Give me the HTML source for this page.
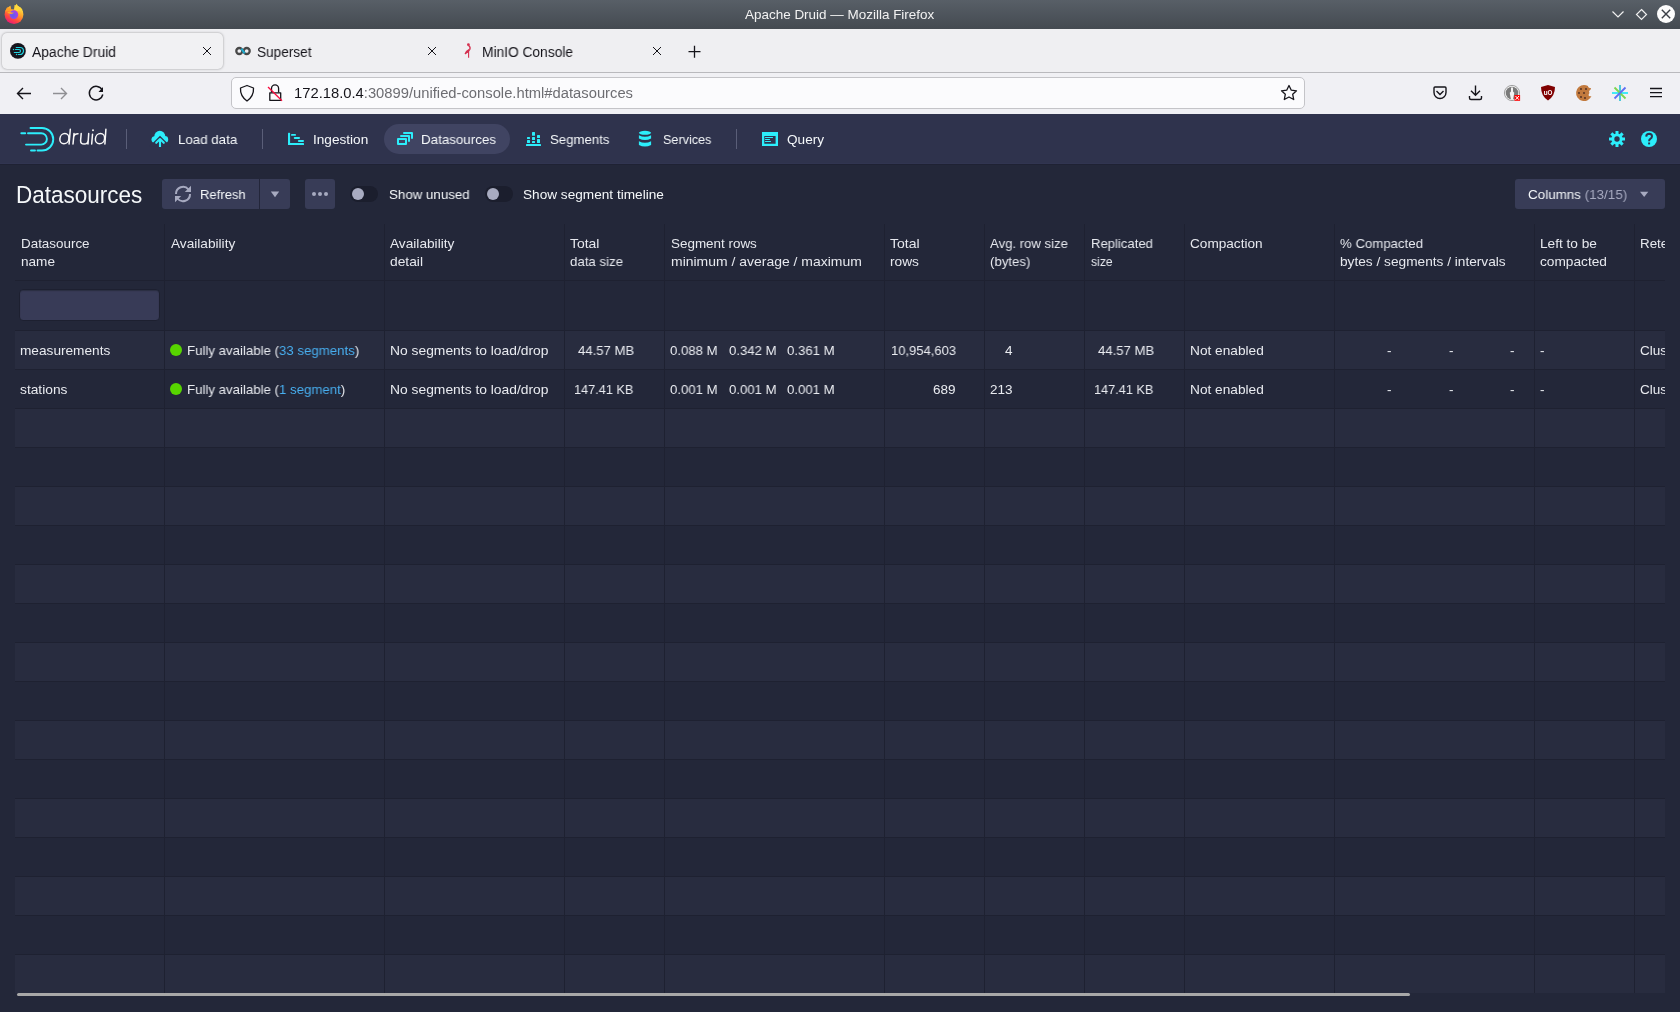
<!DOCTYPE html>
<html><head><meta charset="utf-8">
<style>
*{margin:0;padding:0;box-sizing:border-box}
html,body{width:1680px;height:1012px;overflow:hidden;background:#232739;font-family:"Liberation Sans",sans-serif}
.a{position:absolute;white-space:nowrap}
.t{will-change:transform}
.lk{color:#48aff0}
svg.ov{position:absolute;left:0;top:0}
</style></head><body>
<div class="a" style="left:0;top:0;width:1680px;height:29px;background:linear-gradient(#585f67,#444a51)"></div>
<div class="a t" style="left:745px;top:7px;font-size:13px;line-height:16px;color:#f2f2f2;transform:scaleX(1.0356);transform-origin:0 0">Apache Druid — Mozilla Firefox</div>
<div class="a" style="left:0;top:29px;width:1680px;height:43px;background:#efeff2"></div>
<div class="a" style="left:2px;top:33px;width:221px;height:36px;background:#f1f1f3;border-radius:5px;box-shadow:0 0 2.5px rgba(0,0,0,.38)"></div>
<div class="a t" style="left:32px;top:44px;font-size:14px;line-height:16px;color:#15141a;transform:scaleX(0.9903);transform-origin:0 0">Apache Druid</div>
<div class="a t" style="left:257px;top:44px;font-size:14px;line-height:16px;color:#15141a;transform:scaleX(0.9727);transform-origin:0 0">Superset</div>
<div class="a t" style="left:482px;top:44px;font-size:14px;line-height:16px;color:#15141a;transform:scaleX(0.9828);transform-origin:0 0">MinIO Console</div>
<div class="a" style="left:0;top:72px;width:1680px;height:1px;background:#b9b9bd"></div>
<div class="a" style="left:0;top:73px;width:1680px;height:41px;background:#f0f0f4"></div>
<div class="a" style="left:231px;top:77px;width:1074px;height:32px;background:#fbfbfd;border:1px solid #c4c4c8;border-radius:5px"></div>
<div class="a t" style="left:294px;top:85px;font-size:14px;line-height:16px;color:#15141a;transform:scaleX(1.0546);transform-origin:0 0">172.18.0.4<span style="color:#6d6d72">:30899/unified-console.html#datasources</span></div>
<div class="a" style="left:0;top:114px;width:1680px;height:50px;background:#2f334d"></div>
<div class="a" style="left:0;top:163px;width:1680px;height:1px;background:#313551"></div>
<div class="a" style="left:0;top:164px;width:1680px;height:1px;background:#1f2234"></div>
<div class="a" style="left:384px;top:124px;width:126px;height:30px;border-radius:15px;background:#404462"></div>
<div class="a t" style="left:177.5px;top:132px;font-size:13.6px;line-height:16px;color:#f5f8fa;transform:scaleX(0.9782);transform-origin:0 0">Load data</div>
<div class="a t" style="left:313px;top:132px;font-size:13.6px;line-height:16px;color:#f5f8fa;transform:scaleX(1.0018);transform-origin:0 0">Ingestion</div>
<div class="a t" style="left:421.4px;top:132px;font-size:13.6px;line-height:16px;color:#f5f8fa;transform:scaleX(0.9823);transform-origin:0 0">Datasources</div>
<div class="a t" style="left:549.9px;top:132px;font-size:13.6px;line-height:16px;color:#f5f8fa;transform:scaleX(0.9702);transform-origin:0 0">Segments</div>
<div class="a t" style="left:662.6px;top:132px;font-size:13.6px;line-height:16px;color:#f5f8fa;transform:scaleX(0.9280);transform-origin:0 0">Services</div>
<div class="a t" style="left:787.4px;top:132px;font-size:13.6px;line-height:16px;color:#f5f8fa;transform:scaleX(0.9883);transform-origin:0 0">Query</div>
<div class="a" style="left:126px;top:129px;width:1px;height:20px;background:#5a5e78"></div>
<div class="a" style="left:262px;top:129px;width:1px;height:20px;background:#5a5e78"></div>
<div class="a" style="left:736px;top:129px;width:1px;height:20px;background:#5a5e78"></div>
<div class="a t" style="left:15.5px;top:181px;font-size:22.5px;color:#f5f8fa;line-height:26px;transform:scaleY(1.1);transform-origin:0 0">Datasources</div>
<div class="a" style="left:162px;top:179px;width:128px;height:30px;border-radius:3px;background:#383c57"></div>
<div class="a" style="left:259px;top:179px;width:1px;height:30px;background:#23263a"></div>
<div class="a t" style="left:200px;top:187px;font-size:13.6px;line-height:16px;color:#f5f8fa;transform:scaleX(0.9598);transform-origin:0 0">Refresh</div>
<div class="a" style="left:305px;top:179px;width:30px;height:30px;border-radius:3px;background:#383c57"></div>
<div class="a" style="left:350px;top:186px;width:28px;height:16px;border-radius:8px;background:#1b1e2d"></div>
<div class="a" style="left:352px;top:188px;width:12px;height:12px;border-radius:6px;background:#a8abc0"></div>
<div class="a" style="left:485.3px;top:186px;width:28px;height:16px;border-radius:8px;background:#1b1e2d"></div>
<div class="a" style="left:487.3px;top:188px;width:12px;height:12px;border-radius:6px;background:#a8abc0"></div>
<div class="a t" style="left:388.6px;top:187px;font-size:13.6px;line-height:16px;color:#f5f8fa;transform:scaleX(0.9792);transform-origin:0 0">Show unused</div>
<div class="a t" style="left:523.1px;top:187px;font-size:13.6px;line-height:16px;color:#f5f8fa;transform:scaleX(1.0022);transform-origin:0 0">Show segment timeline</div>
<div class="a" style="left:1515px;top:179px;width:150px;height:30px;border-radius:3px;background:#383c57"></div>
<div class="a t" style="left:1528.3px;top:187px;font-size:13.6px;line-height:16px;color:#f5f8fa;transform:scaleX(0.9868);transform-origin:0 0">Columns <span style="color:#a7aac0">(13/15)</span></div>
<div class="a" style="left:15px;top:331px;width:1650px;height:38px;background:#282c3f"></div>
<div class="a" style="left:15px;top:330px;width:1650px;height:1px;background:#1e2131"></div>
<div class="a" style="left:15px;top:370px;width:1650px;height:38px;background:#232739"></div>
<div class="a" style="left:15px;top:369px;width:1650px;height:1px;background:#1e2131"></div>
<div class="a" style="left:15px;top:409px;width:1650px;height:38px;background:#282c3f"></div>
<div class="a" style="left:15px;top:408px;width:1650px;height:1px;background:#1e2131"></div>
<div class="a" style="left:15px;top:448px;width:1650px;height:38px;background:#232739"></div>
<div class="a" style="left:15px;top:447px;width:1650px;height:1px;background:#1e2131"></div>
<div class="a" style="left:15px;top:487px;width:1650px;height:38px;background:#282c3f"></div>
<div class="a" style="left:15px;top:486px;width:1650px;height:1px;background:#1e2131"></div>
<div class="a" style="left:15px;top:526px;width:1650px;height:38px;background:#232739"></div>
<div class="a" style="left:15px;top:525px;width:1650px;height:1px;background:#1e2131"></div>
<div class="a" style="left:15px;top:565px;width:1650px;height:38px;background:#282c3f"></div>
<div class="a" style="left:15px;top:564px;width:1650px;height:1px;background:#1e2131"></div>
<div class="a" style="left:15px;top:604px;width:1650px;height:38px;background:#232739"></div>
<div class="a" style="left:15px;top:603px;width:1650px;height:1px;background:#1e2131"></div>
<div class="a" style="left:15px;top:643px;width:1650px;height:38px;background:#282c3f"></div>
<div class="a" style="left:15px;top:642px;width:1650px;height:1px;background:#1e2131"></div>
<div class="a" style="left:15px;top:682px;width:1650px;height:38px;background:#232739"></div>
<div class="a" style="left:15px;top:681px;width:1650px;height:1px;background:#1e2131"></div>
<div class="a" style="left:15px;top:721px;width:1650px;height:38px;background:#282c3f"></div>
<div class="a" style="left:15px;top:720px;width:1650px;height:1px;background:#1e2131"></div>
<div class="a" style="left:15px;top:760px;width:1650px;height:38px;background:#232739"></div>
<div class="a" style="left:15px;top:759px;width:1650px;height:1px;background:#1e2131"></div>
<div class="a" style="left:15px;top:799px;width:1650px;height:38px;background:#282c3f"></div>
<div class="a" style="left:15px;top:798px;width:1650px;height:1px;background:#1e2131"></div>
<div class="a" style="left:15px;top:838px;width:1650px;height:38px;background:#232739"></div>
<div class="a" style="left:15px;top:837px;width:1650px;height:1px;background:#1e2131"></div>
<div class="a" style="left:15px;top:877px;width:1650px;height:38px;background:#282c3f"></div>
<div class="a" style="left:15px;top:876px;width:1650px;height:1px;background:#1e2131"></div>
<div class="a" style="left:15px;top:916px;width:1650px;height:38px;background:#232739"></div>
<div class="a" style="left:15px;top:915px;width:1650px;height:1px;background:#1e2131"></div>
<div class="a" style="left:15px;top:955px;width:1650px;height:38px;background:#282c3f"></div>
<div class="a" style="left:15px;top:954px;width:1650px;height:1px;background:#1e2131"></div>
<div class="a" style="left:15px;top:280px;width:1650px;height:1px;background:#1e2131"></div>
<div class="a" style="left:164px;top:224px;width:1px;height:769px;background:#1e2131"></div>
<div class="a" style="left:384px;top:224px;width:1px;height:769px;background:#1e2131"></div>
<div class="a" style="left:564px;top:224px;width:1px;height:769px;background:#1e2131"></div>
<div class="a" style="left:664px;top:224px;width:1px;height:769px;background:#1e2131"></div>
<div class="a" style="left:884px;top:224px;width:1px;height:769px;background:#1e2131"></div>
<div class="a" style="left:984px;top:224px;width:1px;height:769px;background:#1e2131"></div>
<div class="a" style="left:1084px;top:224px;width:1px;height:769px;background:#1e2131"></div>
<div class="a" style="left:1184px;top:224px;width:1px;height:769px;background:#1e2131"></div>
<div class="a" style="left:1334px;top:224px;width:1px;height:769px;background:#1e2131"></div>
<div class="a" style="left:1534px;top:224px;width:1px;height:769px;background:#1e2131"></div>
<div class="a" style="left:1634px;top:224px;width:1px;height:769px;background:#1e2131"></div>
<div class="a t" style="left:20.599999999999998px;top:235px;font-size:13.4px;line-height:18px;color:#e6e8ee;transform:scaleX(1.0011);transform-origin:0 0">Datasource</div>
<div class="a t" style="left:20.599999999999998px;top:253px;font-size:13.4px;line-height:18px;color:#e6e8ee;transform:scaleX(1.0145);transform-origin:0 0">name</div>
<div class="a t" style="left:170.5px;top:235px;font-size:13.4px;line-height:18px;color:#e6e8ee;transform:scaleX(1.0197);transform-origin:0 0">Availability</div>
<div class="a t" style="left:390.4px;top:235px;font-size:13.4px;line-height:18px;color:#e6e8ee;transform:scaleX(1.0212);transform-origin:0 0">Availability</div>
<div class="a t" style="left:390.4px;top:253px;font-size:13.4px;line-height:18px;color:#e6e8ee;transform:scaleX(1.0300);transform-origin:0 0">detail</div>
<div class="a t" style="left:570.4000000000001px;top:235px;font-size:13.4px;line-height:18px;color:#e6e8ee;transform:scaleX(1.0388);transform-origin:0 0">Total</div>
<div class="a t" style="left:570.4000000000001px;top:253px;font-size:13.4px;line-height:18px;color:#e6e8ee;transform:scaleX(0.9883);transform-origin:0 0">data size</div>
<div class="a t" style="left:670.7px;top:235px;font-size:13.4px;line-height:18px;color:#e6e8ee;transform:scaleX(1.0029);transform-origin:0 0">Segment rows</div>
<div class="a t" style="left:670.7px;top:253px;font-size:13.4px;line-height:18px;color:#e6e8ee;transform:scaleX(1.0422);transform-origin:0 0">minimum / average / maximum</div>
<div class="a t" style="left:890.2px;top:235px;font-size:13.4px;line-height:18px;color:#e6e8ee;transform:scaleX(1.0459);transform-origin:0 0">Total</div>
<div class="a t" style="left:890.2px;top:253px;font-size:13.4px;line-height:18px;color:#e6e8ee;transform:scaleX(1.0217);transform-origin:0 0">rows</div>
<div class="a t" style="left:990.2px;top:235px;font-size:13.4px;line-height:18px;color:#e6e8ee;transform:scaleX(0.9807);transform-origin:0 0">Avg. row size</div>
<div class="a t" style="left:990.2px;top:253px;font-size:13.4px;line-height:18px;color:#e6e8ee;transform:scaleX(0.9866);transform-origin:0 0">(bytes)</div>
<div class="a t" style="left:1090.6000000000001px;top:235px;font-size:13.4px;line-height:18px;color:#e6e8ee;transform:scaleX(0.9777);transform-origin:0 0">Replicated</div>
<div class="a t" style="left:1090.6000000000001px;top:253px;font-size:13.4px;line-height:18px;color:#e6e8ee;transform:scaleX(0.9108);transform-origin:0 0">size</div>
<div class="a t" style="left:1190.2px;top:235px;font-size:13.4px;line-height:18px;color:#e6e8ee;transform:scaleX(1.0154);transform-origin:0 0">Compaction</div>
<div class="a t" style="left:1340.2px;top:235px;font-size:13.4px;line-height:18px;color:#e6e8ee;transform:scaleX(0.9862);transform-origin:0 0">% Compacted</div>
<div class="a t" style="left:1340.2px;top:253px;font-size:13.4px;line-height:18px;color:#e6e8ee;transform:scaleX(1.0212);transform-origin:0 0">bytes / segments / intervals</div>
<div class="a t" style="left:1540.2px;top:235px;font-size:13.4px;line-height:18px;color:#e6e8ee;transform:scaleX(1.0201);transform-origin:0 0">Left to be</div>
<div class="a t" style="left:1540.2px;top:253px;font-size:13.4px;line-height:18px;color:#e6e8ee;transform:scaleX(1.0221);transform-origin:0 0">compacted</div>
<div class="a" style="left:1635px;top:224px;width:30px;height:40px;overflow:hidden"><div class="a t" style="left:5px;top:11px;font-size:13.4px;line-height:18px;color:#e6e8ee">Retention</div></div>
<div class="a" style="left:19px;top:289px;width:141px;height:32px;border-radius:4px;background:#383b57;border:1px solid #1d2030;box-shadow:inset 0 1px 1px rgba(16,22,26,.35)"></div>
<div class="a t" style="left:20.2px;top:343px;font-size:13.5px;line-height:16px;color:#e9ebf0;transform:scaleX(1.0113);transform-origin:0 0">measurements</div>
<div class="a t" style="left:187px;top:343px;font-size:13.5px;line-height:16px;color:#e9ebf0;transform:scaleX(0.9813);transform-origin:0 0">Fully available (<span class="lk">33 segments</span>)</div>
<div class="a t" style="left:390.2px;top:343px;font-size:13.5px;line-height:16px;color:#e9ebf0;transform:scaleX(1.0253);transform-origin:0 0">No segments to load/drop</div>
<div class="a t" style="left:577.5px;top:343px;font-size:13.5px;line-height:16px;color:#e9ebf0;transform:scaleX(0.9727);transform-origin:0 0">44.57 MB</div>
<div class="a t" style="left:670.1px;top:343px;font-size:13.5px;line-height:16px;color:#e9ebf0;transform:scaleX(0.9759);transform-origin:0 0">0.088 M</div>
<div class="a t" style="left:728.6px;top:343px;font-size:13.5px;line-height:16px;color:#e9ebf0;transform:scaleX(0.9759);transform-origin:0 0">0.342 M</div>
<div class="a t" style="left:787px;top:343px;font-size:13.5px;line-height:16px;color:#e9ebf0;transform:scaleX(0.9779);transform-origin:0 0">0.361 M</div>
<div class="a t" style="left:890.5px;top:343px;font-size:13.5px;line-height:16px;color:#e9ebf0;transform:scaleX(0.9635);transform-origin:0 0">10,954,603</div>
<div class="a t" style="left:1004.8px;top:343px;font-size:13.5px;line-height:16px;color:#e9ebf0">4</div>
<div class="a t" style="left:1097.5px;top:343px;font-size:13.5px;line-height:16px;color:#e9ebf0;transform:scaleX(0.9727);transform-origin:0 0">44.57 MB</div>
<div class="a t" style="left:1190.4px;top:343px;font-size:13.5px;line-height:16px;color:#e9ebf0;transform:scaleX(1.0137);transform-origin:0 0">Not enabled</div>
<div class="a t" style="left:1387px;top:343px;font-size:13.5px;line-height:16px;color:#e9ebf0">-</div>
<div class="a t" style="left:1448.5px;top:343px;font-size:13.5px;line-height:16px;color:#e9ebf0">-</div>
<div class="a t" style="left:1509.5px;top:343px;font-size:13.5px;line-height:16px;color:#e9ebf0">-</div>
<div class="a t" style="left:1540px;top:343px;font-size:13.5px;line-height:16px;color:#e9ebf0">-</div>
<div class="a t" style="left:20.2px;top:382px;font-size:13.5px;line-height:16px;color:#e9ebf0;transform:scaleX(1.0189);transform-origin:0 0">stations</div>
<div class="a t" style="left:187px;top:382px;font-size:13.5px;line-height:16px;color:#e9ebf0;transform:scaleX(0.9812);transform-origin:0 0">Fully available (<span class="lk">1 segment</span>)</div>
<div class="a t" style="left:390.2px;top:382px;font-size:13.5px;line-height:16px;color:#e9ebf0;transform:scaleX(1.0253);transform-origin:0 0">No segments to load/drop</div>
<div class="a t" style="left:574.3px;top:382px;font-size:13.5px;line-height:16px;color:#e9ebf0;transform:scaleX(0.9422);transform-origin:0 0">147.41 KB</div>
<div class="a t" style="left:670.1px;top:382px;font-size:13.5px;line-height:16px;color:#e9ebf0;transform:scaleX(0.9759);transform-origin:0 0">0.001 M</div>
<div class="a t" style="left:728.6px;top:382px;font-size:13.5px;line-height:16px;color:#e9ebf0;transform:scaleX(0.9759);transform-origin:0 0">0.001 M</div>
<div class="a t" style="left:787px;top:382px;font-size:13.5px;line-height:16px;color:#e9ebf0;transform:scaleX(0.9779);transform-origin:0 0">0.001 M</div>
<div class="a t" style="left:933.3px;top:382px;font-size:13.5px;line-height:16px;color:#e9ebf0;transform:scaleX(0.9903);transform-origin:0 0">689</div>
<div class="a t" style="left:990.1px;top:382px;font-size:13.5px;line-height:16px;color:#e9ebf0;transform:scaleX(0.9903);transform-origin:0 0">213</div>
<div class="a t" style="left:1094.3px;top:382px;font-size:13.5px;line-height:16px;color:#e9ebf0;transform:scaleX(0.9422);transform-origin:0 0">147.41 KB</div>
<div class="a t" style="left:1190.4px;top:382px;font-size:13.5px;line-height:16px;color:#e9ebf0;transform:scaleX(1.0137);transform-origin:0 0">Not enabled</div>
<div class="a t" style="left:1387px;top:382px;font-size:13.5px;line-height:16px;color:#e9ebf0">-</div>
<div class="a t" style="left:1448.5px;top:382px;font-size:13.5px;line-height:16px;color:#e9ebf0">-</div>
<div class="a t" style="left:1509.5px;top:382px;font-size:13.5px;line-height:16px;color:#e9ebf0">-</div>
<div class="a t" style="left:1540px;top:382px;font-size:13.5px;line-height:16px;color:#e9ebf0">-</div>
<div class="a" style="left:1635px;top:331px;width:30px;height:38px;overflow:hidden"><div class="a t" style="left:5px;top:12px;font-size:13.5px;line-height:16px;color:#e9ebf0">Cluster default</div></div>
<div class="a" style="left:170.4px;top:344px;width:12px;height:12px;border-radius:6px;background:#57d500"></div>
<div class="a" style="left:1635px;top:370px;width:30px;height:38px;overflow:hidden"><div class="a t" style="left:5px;top:12px;font-size:13.5px;line-height:16px;color:#e9ebf0">Cluster default</div></div>
<div class="a" style="left:170.4px;top:383px;width:12px;height:12px;border-radius:6px;background:#57d500"></div>
<svg class="ov" width="1680" height="1012" viewBox="0 0 1680 1012">
<defs><linearGradient id="ffg" x1="0.8" y1="0.1" x2="0.3" y2="1"><stop offset="0" stop-color="#ffe94a"/><stop offset="0.35" stop-color="#ffa52a"/><stop offset="0.7" stop-color="#ff4a3d"/><stop offset="1" stop-color="#e8177c"/></linearGradient><radialGradient id="ffp" cx="0.4" cy="0.6" r="0.7"><stop offset="0" stop-color="#5a5ff0"/><stop offset="1" stop-color="#b43ae6"/></radialGradient></defs>
<circle cx="14" cy="14.5" r="9.4" fill="url(#ffg)"/>
<path d="M10.2 4.5 L14.6 4.2 L14.2 9.6 L11.2 9.2 Z" fill="#565d65"/>
<path d="M14 9.5 Q14.5 6 16.6 3.7 Q17.5 6.5 20.5 7.5 Q22 8.5 22.5 10 L17 11 Z" fill="#ffd93c"/>
<path d="M5.3 11.5 Q6 8.5 7.3 6.9 L8.4 9.2 L10.3 7.5 L11.4 10.5 Z" fill="#ff9c24"/>
<circle cx="13.9" cy="14.6" r="4.3" fill="url(#ffp)"/>
<path d="M7.2 12.2 Q9.5 11 11.2 12.6 L14.2 12.8 Q12.2 14.2 10.2 13.8 Q8.2 13.6 7.2 12.2 Z" fill="#ffac24"/>
<path d="M1612.5 11.5 L1618 17 L1623.5 11.5" fill="none" stroke="#f0f0f0" stroke-width="1.2"/>
<path d="M1641.5 9.5 L1646.5 14.5 L1641.5 19.5 L1636.5 14.5 Z" fill="none" stroke="#f0f0f0" stroke-width="1.2"/>
<circle cx="1666" cy="14" r="9" fill="#fcfcfc"/>
<path d="M1661.8 9.8 L1670.2 18.2 M1670.2 9.8 L1661.8 18.2" stroke="#3a3f46" stroke-width="1.4"/>
<circle cx="17.9" cy="50.9" r="7.9" fill="#17151d"/>
<path d="M16.3 47.5 H20 A3.5 3.5 0 0 1 20 54.5 H18.3 M15.5 49.5 H19 A1.5 1.5 0 0 1 19 52.5 H14.3" fill="none" stroke="#22d3e0" stroke-width="1.2" stroke-linecap="round"/>
<circle cx="13.5" cy="49.5" r="0.7" fill="#22d3e0"/><circle cx="16.5" cy="54.5" r="0.7" fill="#22d3e0"/>
<circle cx="239.3" cy="51" r="3" fill="none" stroke="#484848" stroke-width="2.3"/><circle cx="246.7" cy="51" r="3" fill="none" stroke="#484848" stroke-width="2.3"/>
<path d="M241.3 48.6 L244.7 53.4" stroke="#20a7c9" stroke-width="2.3"/>
<circle cx="468.4" cy="44.7" r="1.4" fill="#d4304f"/>
<path d="M468.6 45.5 Q470.8 47 469.8 49.5 Q468.5 52 465 53.8" fill="none" stroke="#d4304f" stroke-width="1.3"/>
<path d="M464.5 54 Q466 50 469.5 48.5 L468.7 52 Z" fill="#d4304f"/>
<path d="M468.6 51 V57.8" stroke="#d4304f" stroke-width="1.1"/>
<path d="M203 47 L211 55 M211 47 L203 55" stroke="#15141a" stroke-width="1.0"/>
<path d="M428 47 L436 55 M436 47 L428 55" stroke="#15141a" stroke-width="1.0"/>
<path d="M653 47 L661 55 M661 47 L653 55" stroke="#15141a" stroke-width="1.0"/>
<path d="M688.5 51.7 H700.5 M694.5 45.7 V57.7" stroke="#15141a" stroke-width="1.3"/>
<path d="M31 93.5 H17.5 M23 88 L17.5 93.5 L23 99" fill="none" stroke="#15141a" stroke-width="1.4"/>
<path d="M53 93.5 H66.5 M61 88 L66.5 93.5 L61 99" fill="none" stroke="#8f8f93" stroke-width="1.4"/>
<path d="M102.2 90 A6.8 6.8 0 1 0 102.8 94.5" fill="none" stroke="#15141a" stroke-width="1.5"/>
<path d="M98.5 92 L103 92 L103 87 Z" fill="#15141a"/>
<path d="M247 85.5 L253.5 88 Q254 96 247 101 Q240 96 240.5 88 Z" fill="none" stroke="#15141a" stroke-width="1.3" stroke-linejoin="round"/>
<path d="M269.8 92.8 H280.7 V100.3 H269.8 Z" fill="none" stroke="#15141a" stroke-width="1.3" stroke-linejoin="round"/>
<path d="M271.5 92.5 V88.5 A3.5 3.5 0 0 1 278.6 88.5 V92.5" fill="none" stroke="#15141a" stroke-width="1.3"/>
<path d="M268 87 L282 100.8" stroke="#f90b3e" stroke-width="1.3"/>
<path d="M1289 85.5 L1291.3 90.2 L1296.5 90.8 L1292.7 94.3 L1293.7 99.5 L1289 97 L1284.3 99.5 L1285.3 94.3 L1281.5 90.8 L1286.7 90.2 Z" fill="none" stroke="#15141a" stroke-width="1.3" stroke-linejoin="round"/>
<path d="M1434 88 Q1434 87 1435 87 H1445 Q1446 87 1446 88 V92.5 A6 6 0 0 1 1434 92.5 Z" fill="none" stroke="#15141a" stroke-width="1.4"/>
<path d="M1436.5 91 L1440 94.5 L1443.5 91" fill="none" stroke="#15141a" stroke-width="1.4"/>
<path d="M1475.5 85.5 V95 M1471 90.8 L1475.5 95.3 L1480 90.8 M1469.5 96 V98 Q1469.5 99.5 1471 99.5 H1480 Q1481.5 99.5 1481.5 98 V96" fill="none" stroke="#15141a" stroke-width="1.4"/>
<circle cx="1512" cy="93" r="7.6" fill="#f4f4f4" stroke="#8a8a8a" stroke-width="0.8"/>
<circle cx="1512" cy="93" r="6.3" fill="#7a7a7a"/>
<path d="M1511 87.5 h2 v4 q2 1 1 3 l-1 5 h-2 l-1 -5 q-1 -2 1 -3 Z" fill="#f4f4f4"/>
<rect x="1514.5" y="95" width="5.6" height="5.8" fill="#f00"/>
<path d="M1515.5 96 L1519 99.8 M1519 96 L1515.5 99.8" stroke="#fff" stroke-width="1"/>
<path d="M1548 85 L1555 87 Q1555 96 1548 100.5 Q1541 96 1541 87 Z" fill="#800000"/>
<text x="1548" y="95.2" font-size="6.3" font-weight="bold" fill="#fff" text-anchor="middle" font-family="Liberation Sans">uO</text>
<path d="M1584 85 A8 8 0 1 0 1591.5 96 Q1589 97 1588.5 95 Q1590 93 1589 91 Q1591 90 1591 88 Q1588 88 1588 86 Q1586 85 1584 85 Z" fill="#c27a3e"/>
<circle cx="1581" cy="89" r="0.9" fill="#4a2a20"/>
<circle cx="1586" cy="89" r="0.9" fill="#4a2a20"/>
<circle cx="1579" cy="93" r="0.9" fill="#4a2a20"/>
<circle cx="1584" cy="93" r="0.9" fill="#4a2a20"/>
<circle cx="1581" cy="97" r="0.9" fill="#4a2a20"/>
<circle cx="1585" cy="98" r="0.9" fill="#4a2a20"/>
<path d="M1620 85 V101" stroke="#3cc6d8" stroke-width="1.8"/>
<path d="M1612 93 H1628" stroke="#2ee8f7" stroke-width="1.8"/>
<path d="M1614.5 87.5 L1625.5 98.5" stroke="#7cd64e" stroke-width="1.8"/>
<path d="M1625.5 87.5 L1614.5 98.5" stroke="#5e6ff3" stroke-width="1.8"/>
<path d="M1650 88.5 H1662 M1650 92.6 H1662 M1650 96.6 H1662" stroke="#15141a" stroke-width="1.3"/>
<path d="M30.5 128 H42 A11.2 11.2 0 0 1 42 150.5 H37.5 M35 150.5 H31 M28 133.2 H41.2 A5.7 5.7 0 0 1 41.2 144.6 H26 M25.2 133.2 H21.3" fill="none" stroke="#2ceefb" stroke-width="1.9" stroke-linecap="round"/>
<g fill="none" stroke="#f8f8f8" stroke-width="1.5" stroke-linecap="round"><ellipse cx="64.4" cy="138.7" rx="4.5" ry="5.1" transform="skewX(-5) translate(12.13 0)"/><path d="M70.3 129.2 L69.1 144"/><path d="M74 133.6 L73 144 M73.6 136.6 Q74.8 133.7 78 133.8"/><path d="M81.2 133.6 L80.6 140.5 Q80.4 144.1 84.2 144.1 Q87.8 144 88.1 140.5 M88.7 133.6 L88 144"/><path d="M92.5 134.2 L91.7 144"/><ellipse cx="100" cy="138.7" rx="4.6" ry="5.1" transform="skewX(-5) translate(12.13 0)"/><path d="M105.9 129.2 L104.9 144"/></g><circle cx="93" cy="130.3" r="0.95" fill="#f8f8f8"/>
<g fill="#2ceefb">
<circle cx="159.8" cy="136.3" r="5.5"/><circle cx="154.9" cy="139.6" r="3.4"/><circle cx="164.8" cy="139.5" r="3.4"/>
<rect x="154" y="138" width="11" height="4.5"/>
</g>
<path d="M149.5 146.3 L160 135.8 L170.5 146.3 Z" fill="#2f334d"/>
<path d="M156.2 142.8 L160 139 L163.8 142.8" fill="none" stroke="#2ceefb" stroke-width="2.1" stroke-linecap="round" stroke-linejoin="round"/>
<path d="M160 140 V147" stroke="#2ceefb" stroke-width="2.1"/>
<g fill="#2ceefb">
<rect x="288" y="132.8" width="2.1" height="12.2" rx="0.6"/><rect x="288" y="143" width="16" height="2" rx="0.6"/>
<rect x="291" y="133.9" width="5" height="1.9" rx="0.9"/><rect x="293.8" y="136.9" width="6.2" height="2" rx="0.9"/><rect x="297.9" y="140" width="6.1" height="1.9" rx="0.9"/>
<rect x="526" y="144" width="15" height="2" rx="0.6"/>
<rect x="527" y="136.9" width="3" height="2" rx="0.5"/>
<rect x="527" y="140" width="3" height="3" rx="0.5"/>
<rect x="532" y="131.9" width="3" height="3.9" rx="0.5"/>
<rect x="532" y="136.9" width="3" height="3.1" rx="0.5"/>
<rect x="532" y="141" width="3" height="2" rx="0.5"/>
<rect x="537" y="135" width="3" height="3" rx="0.5"/>
<rect x="537" y="139" width="3" height="4" rx="0.5"/>
<ellipse cx="645" cy="132.8" rx="6.1" ry="2"/>
<path d="M638.9 135.3 Q645 138.4 651.1 135.3 V138.6 Q645 141.6 638.9 138.6 Z"/>
<path d="M638.9 141.2 Q645 144.2 651.1 141.2 V145 Q645 148 638.9 145 Z"/>
</g>
<g fill="none" stroke="#2ceefb" stroke-width="2" stroke-linecap="round" stroke-linejoin="round"><rect x="398" y="139" width="8" height="5"/><path d="M401 136 H409 V141"/><path d="M404 133 H412 V138"/></g>
<path d="M762 132 H778 V146 H762 Z M764.3 136 V143.7 H775.6 V136 Z" fill="#2ceefb" fill-rule="evenodd"/>
<path d="M765.5 137.5 H772.5 M765.5 139.5 H769.5 M765.5 141.5 H770.5" stroke="#2ceefb" stroke-width="1.1" stroke-linecap="round"/>
<g transform="translate(1617 139)">
<rect x="-1.5" y="-8" width="3" height="4" fill="#2ceefb" transform="rotate(0)"/>
<rect x="-1.5" y="-8" width="3" height="4" fill="#2ceefb" transform="rotate(45)"/>
<rect x="-1.5" y="-8" width="3" height="4" fill="#2ceefb" transform="rotate(90)"/>
<rect x="-1.5" y="-8" width="3" height="4" fill="#2ceefb" transform="rotate(135)"/>
<rect x="-1.5" y="-8" width="3" height="4" fill="#2ceefb" transform="rotate(180)"/>
<rect x="-1.5" y="-8" width="3" height="4" fill="#2ceefb" transform="rotate(225)"/>
<rect x="-1.5" y="-8" width="3" height="4" fill="#2ceefb" transform="rotate(270)"/>
<rect x="-1.5" y="-8" width="3" height="4" fill="#2ceefb" transform="rotate(315)"/>
<circle r="5.6" fill="#2ceefb"/><circle r="2.7" fill="#2f334d"/></g>
<circle cx="1649" cy="139" r="8" fill="#2ceefb"/>
<path d="M1646.2 136.6 Q1646.3 133.8 1649.2 133.8 Q1652 133.9 1652 136.3 Q1652 137.8 1650.3 138.9 Q1649.1 139.7 1649.1 141.2" fill="none" stroke="#2f334d" stroke-width="2"/>
<rect x="1648.1" y="142.5" width="2" height="1.9" fill="#2f334d"/>
<path d="M176 194 A7 7 0 0 1 188.5 189.5 M190 194 A7 7 0 0 1 177.5 198.5" fill="none" stroke="#a7aac0" stroke-width="2"/>
<path d="M184.8 192 H191 V185.8 Z M181.2 196.1 H175 V202.3 Z" fill="#a7aac0"/>
<path d="M270.8 191.6 H279.2 L275 197.2 Z" fill="#a7aac0"/>
<path d="M1640 191.7 H1648.3 L1644.15 197 Z" fill="#a7aac0"/>
<circle cx="314" cy="194" r="2" fill="#a7aac0"/>
<circle cx="320" cy="194" r="2" fill="#a7aac0"/>
<circle cx="326" cy="194" r="2" fill="#a7aac0"/>
</svg>
<div class="a" style="left:17px;top:993px;width:1393px;height:3px;border-radius:2px;background:#a8a8a8"></div>
</body></html>
